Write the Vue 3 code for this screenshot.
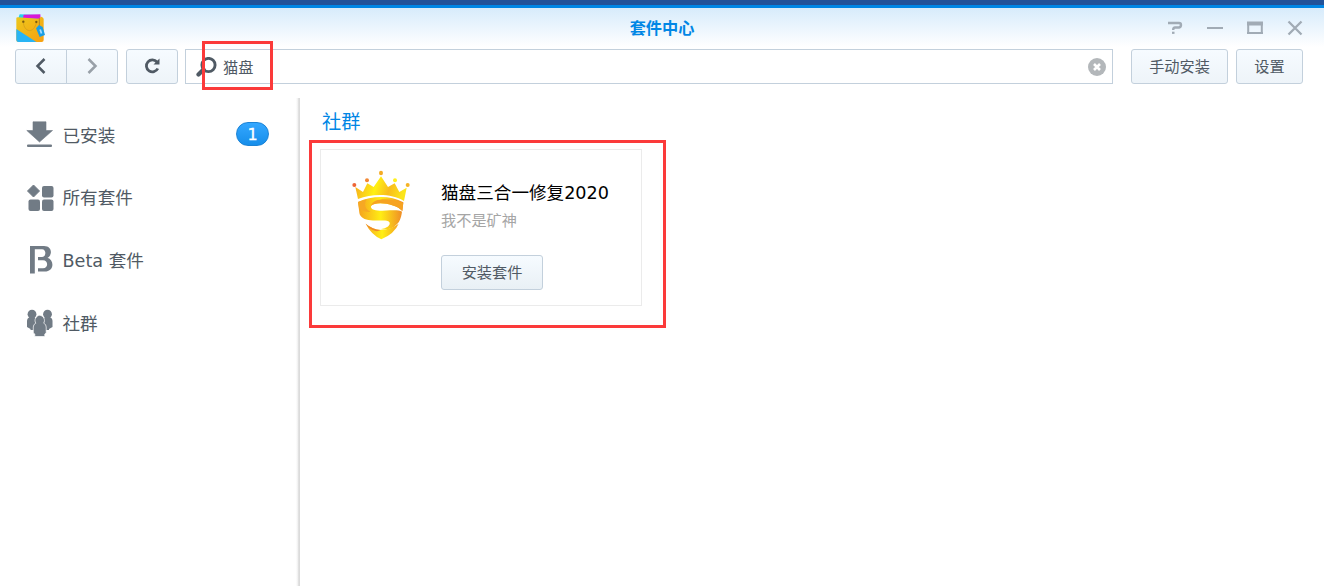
<script setup>
const categories = [
  { id: 'installed', label: '已安装', badge: 1 },
  { id: 'all', label: '所有套件' },
  { id: 'beta', label: 'Beta 套件' },
  { id: 'community', label: '社群' },
]
</script>

<template>
  <div class="window">
    <div class="desktop-strip"></div>
    <header class="titlebar">
      <svg class="app-icon" viewBox="0 0 90 90">
        <defs>
          <linearGradient id="bag" x1="0" y1="0" x2="1" y2="1">
            <stop offset="0" stop-color="#ecc81c" /><stop offset="1" stop-color="#f8a010" />
          </linearGradient>
        </defs>
        <path d="M10 16 L14 4 L72 6 L76 20Z" fill="#28d0ee" />
        <path d="M24 15 L26 5 L76 4 L77 18Z" fill="#d818d8" />
        <path d="M4 16 Q4 13 8 13 L70 17 L79 11 Q86 13 86 18 V81 Q86 87 80 87 H10 Q4 87 4 81Z" fill="url(#bag)" />
        <path d="M4 48 L64 87 H9 Q4 86 4 81Z" fill="#28b4f4" />
        <path d="M25 27 C27 60 58 62 64 28" fill="none" stroke="#d8a41c" stroke-width="3" />
        <circle cx="25" cy="26" r="3.500" fill="#795b10" />
        <circle cx="64" cy="27" r="3.500" fill="#795b10" />
        <path d="M73 15 V40" stroke="#b38426" stroke-width="3" />
        <path d="M63 46 L72 36 L83 42 L90 66 L74 72Z" fill="#1a9ee4" />
        <path d="M73 50 L78 49 L82 61 L77 62Z" fill="#a2dcff" />
      </svg>
      <h1>套件中心</h1>
      <div class="window-controls">
        <svg viewBox="0 0 16 16"><path d="M1 3h11q2 0 2 2t-2 2.500H8q-1.800 0-1.800 2.500" stroke-width="2.400" /><path d="M5 12.800h2.500" stroke-width="2.200" /></svg>
        <svg viewBox="0 0 16 16"><path d="M0 8h16" stroke-width="2" /></svg>
        <svg viewBox="0 0 16 16"><path d="M1.200 2v11.500M14.800 2v11.500M0 13h16" stroke-width="2" /><path d="M0 3.500h16" stroke-width="4" /></svg>
        <svg viewBox="0 0 16 16"><path d="M1.500 1.500l13 13M14.500 1.500l-13 13" stroke-width="2.300" /></svg>
      </div>
    </header>

    <div class="toolbar">
      <div class="nav-group">
        <button class="btn"><svg viewBox="0 0 16 16"><path d="M11.500 1L4.500 8l7 7" /></svg></button>
        <button class="btn forward"><svg viewBox="0 0 16 16"><path d="M4.500 1L11.500 8L4.500 15" /></svg></button>
      </div>
      <button class="btn refresh"><svg viewBox="0 0 16 16"><path d="M13 4A6 6 0 1 0 13.800 10.500" stroke-width="2.800" /><path d="M9.500 6.500h6v-6z" fill="#505a64" stroke="none" /></svg></button>
      <div class="search">
        <svg class="magnifier" viewBox="0 0 21 20"><circle cx="12.500" cy="8" r="6.600" fill="none" stroke="#505a64" stroke-width="2.900" /><path d="M7.500 12.500L2.500 17.500" stroke="#505a64" stroke-width="4.200" stroke-linecap="round" /></svg>
        <span class="query">猫盘</span>
        <svg class="clear" viewBox="0 0 18 18"><circle cx="9" cy="9" r="9" fill="#b3b7ba" /><path d="M6 6l6 6M12 6l-6 6" stroke="#fff" stroke-width="2.600" /></svg>
        <div class="mark search-mark"></div>
      </div>
      <button class="btn manual">手动安装</button>
      <button class="btn settings">设置</button>
    </div>

    <div class="body">
      <nav class="sidebar">
        <a v-for="item in categories" :key="item.id" class="category">
          <svg viewBox="0 0 28 28" fill="#717b85">
            <template v-if="item.id === 'installed'">
              <path d="M7 .8H20V9.500H26.500L13.500 21L.800 9.500H7Z" stroke="#717b85" stroke-width=".6" stroke-linejoin="round" /><rect x="1" y="23.500" width="25" height="2.600" rx="1" />
            </template>
            <template v-else-if="item.id === 'all'">
              <path d="M7.500 1L13.500 7L7.500 13L1.500 7Z" stroke="#717b85" stroke-linejoin="round" /><rect x="16" y="2" width="11.500" height="11.500" rx="2" /><rect x="2.500" y="15.500" width="11.500" height="11.500" rx="2" /><rect x="16" y="15.500" width="11.500" height="11.500" rx="2" />
            </template>
            <template v-else-if="item.id === 'beta'">
              <rect x="4" y="0" width="4.800" height="27.500" />
              <path fill-rule="evenodd" d="M8 0H18C26.500 0 26.500 9.500 21.500 11.800C28.500 14 28.500 25.500 18.500 25.500H12V22.300H17C22.500 22.300 22.500 14.300 17 14.300H12V11H16C20.500 11 20.500 3.200 16 3.200H8Z" />
            </template>
            <template v-else>
              <circle cx="6" cy="5.200" r="4.400" /><circle cx="21.500" cy="5.200" r="4.400" />
              <path d="M4 8H8Q10.500 9 10.500 12V21H4.500V20L1 18V12Q1 9 4 8zM23.500 8H19.500Q17 9 17 12V21H23V20L26.500 18V12Q26.500 9 23.500 8z" />
              <path d="M13.700 6.300A5.200 5.200 0 0 1 17.700 14.200Q20.200 15.200 20.200 18V24L18.800 25V27.500H8.800V25L7.300 24V18Q7.300 15.200 9.800 14.200A5.200 5.200 0 0 1 13.700 6.300z" stroke="#fff" stroke-width=".7" />
            </template>
          </svg>
          <span class="category-label">{{ item.label }}</span>
          <span v-if="item.badge" class="badge">{{ item.badge }}</span>
        </a>
      </nav>
      <main class="content">
        <h2>社群</h2>
        <article class="card">
          <svg class="package-icon" viewBox="0 0 240 270">
            <defs>
              <linearGradient id="gold" x1="0" y1="0" x2="1" y2=".15">
                <stop offset="0" stop-color="#f5a720" /><stop offset=".45" stop-color="#fff012" /><stop offset=".72" stop-color="#f9bc1c" /><stop offset="1" stop-color="#fbe51a" />
              </linearGradient>
              <linearGradient id="ribbon" x1="0" y1="0" x2="1" y2="0">
                <stop offset="0" stop-color="#f5a01f" /><stop offset=".5" stop-color="#ffed14" /><stop offset="1" stop-color="#ee8728" />
              </linearGradient>
              <linearGradient id="tip">
                <stop offset="0" stop-color="#f7a522" /><stop offset=".5" stop-color="#fff015" /><stop offset="1" stop-color="#f4a020" />
              </linearGradient>
            </defs>
            <path d="M46 81L69 96L82 70L101 81L123 49L144 81L164 70L178 96L200 83L192 123C154 100 98 100 54 117Z" fill="url(#gold)" />
            <path d="M54 126C96 106 152 106 190 127L187 153C170 131 106 121 93 138C89 154 126 153 150 151C166 150 180 151 186 155C183 176 178 187 169 194C158 206 140 210 120 208C142 205 153 195 148 186C140 177 114 184 92 181C74 179 60 172 58 158Z" fill="url(#ribbon)" />
            <path d="M93 138C98 112 150 114 190 128L187 153C170 131 106 121 93 138Z" fill="#f6a322" />
            <path d="M54 126L80 118C70 134 76 148 92 156C78 158 66 150 57 144Z" fill="#f6a824" />
            <path d="M77 191Q98 209 122 210Q152 209 176 191Q164 220 124 238Q93 223 77 191Z" fill="url(#tip)" />
            <path d="M77 191Q98 209 122 210Q112 217 98 210Q85 204 77 191Z" fill="#ee8927" />
            <circle cx="43" cy="75" r="6" fill="#ee6536" /><circle cx="81" cy="61" r="6" fill="#f28835" />
            <ellipse cx="123" cy="39" rx="6" ry="7" fill="#f4ab25" /><circle cx="165" cy="61" r="6" fill="#fff01c" /><circle cx="203" cy="75" r="6" fill="#f5b326" />
          </svg>
          <div class="details">
            <h3>猫盘三合一修复2020</h3>
            <p>我不是矿神</p>
            <button class="btn install">安装套件</button>
          </div>
          <div class="mark card-mark"></div>
        </article>
      </main>
    </div>
  </div>
</template>

<style>
body { margin: 0; background: #fff; }
</style>

<style scoped>
.window { width: 1324px; height: 586px; overflow: hidden; display: flex; flex-direction: column; font-family: "DejaVu Sans", "Noto Sans CJK SC", sans-serif; color: #505a64; background: #fff; }
.window * { box-sizing: border-box; }
.desktop-strip { flex: 0 0 8px; background: #225299; border-bottom: 3px solid #0086e5; }
.titlebar { flex: 0 0 41px; min-height: 0; display: grid; grid-template-columns: 200px 1fr 200px; background: linear-gradient(#d7ebfb, #fff 95%); }
.app-icon { width: 30px; height: 30px; margin: 5px 0 0 15px; }
h1 { margin: 0; height: 41px; font: bold 16.2px/42px "DejaVu Sans", "Noto Sans CJK SC", sans-serif; color: #0086e5; text-align: center; }
.window-controls { display: flex; gap: 24px; margin: 12px 21px 0 0; justify-content: flex-end; }
.window-controls svg { width: 16px; height: 16px; fill: none; stroke: #a1abb5; }
.toolbar { height: 35px; display: flex; padding: 0 21px 0 15px; }
.btn { height: 35px; padding: 0; border: 1px solid #c3d0dc; border-radius: 3px; background: linear-gradient(#f6fbff, #e9f0f5); font: 15.2px/32px "DejaVu Sans", "Noto Sans CJK SC", sans-serif; color: #505a64; text-align: center; display: flex; align-items: center; justify-content: center; }
.toolbar .btn { background: linear-gradient(#f6fbff, #eef4f9); }
.btn svg { width: 16px; height: 16px; margin-top: -1px; fill: none; stroke: #505a64; stroke-width: 2.5; }
.nav-group { display: flex; width: 103px; margin-right: 8px; }
.nav-group .btn { width: 52px; border-radius: 3px 0 0 3px; }
.nav-group .forward { margin-left: -1px; border-radius: 0 3px 3px 0; }
.forward svg { opacity: .55; }
.refresh { width: 52px; margin-right: 7px; }
.search { width: 928px; height: 35px; border: 1px solid #c3d0dc; position: relative; display: flex; align-items: center; padding: 0 6px 0 10px; background: #fff; margin-right: 18px; }
.magnifier { width: 21px; height: 20px; }
.query { font-size: 15.2px; line-height: 20px; margin: 3px 0 0 6px; }
.clear { width: 18px; height: 18px; margin-left: auto; }
.manual { width: 97px; margin-right: 8px; }
.settings { width: 67px; }
.mark { position: absolute; border: 3px solid #fb3a3a; pointer-events: none; }
.search-mark { left: 16px; top: -9px; width: 71px; height: 49px; }
.body { flex: 1; display: flex; margin-top: 14px; }
.sidebar { width: 300px; padding-top: 6px; background: linear-gradient(90deg, #fff 296px, #eee 298px, #d4d4d4 299px, #e2e2e2 300px); }
.category { height: 62.6px; padding: 0 31px 0 26px; display: flex; align-items: center; }
.category > svg { width: 28px; height: 28px; margin-right: 8.5px; }
.category-label { font-size: 17.6px; line-height: 30px; padding-top: 1px; }
.badge { width: 33px; height: 24px; margin: -2px 0 0 auto; border: 1px solid #1b83d6; border-radius: 12px; background: linear-gradient(#34a7ff, #168eea); color: #fff; font-size: 16px; line-height: 23px; text-align: center; -webkit-text-stroke: .3px #fff; }
.content { flex: 1; padding: 10px 0 0 20px; }
h2 { margin: 0 0 11px 2px; font-weight: normal; font-size: 19.2px; line-height: 30px; color: #0086e5; }
.card { position: relative; display: flex; width: 322px; height: 157px; border: 1px solid #ebebeb; }
.package-icon { width: 80px; height: 90px; margin: 10px 0 0 19px; }
.details { margin: 28px 0 0 21px; }
h3 { margin: 0; font-weight: normal; font-size: 17.6px; line-height: 30px; color: #000; white-space: nowrap; }
.details p { margin: 2px 0 23px; font-size: 15.2px; line-height: 22px; color: #a5a5a5; }
.install { width: 102px; line-height: 34px; }
.card-mark { left: -12px; top: -10px; width: 357px; height: 188px; }
</style>
